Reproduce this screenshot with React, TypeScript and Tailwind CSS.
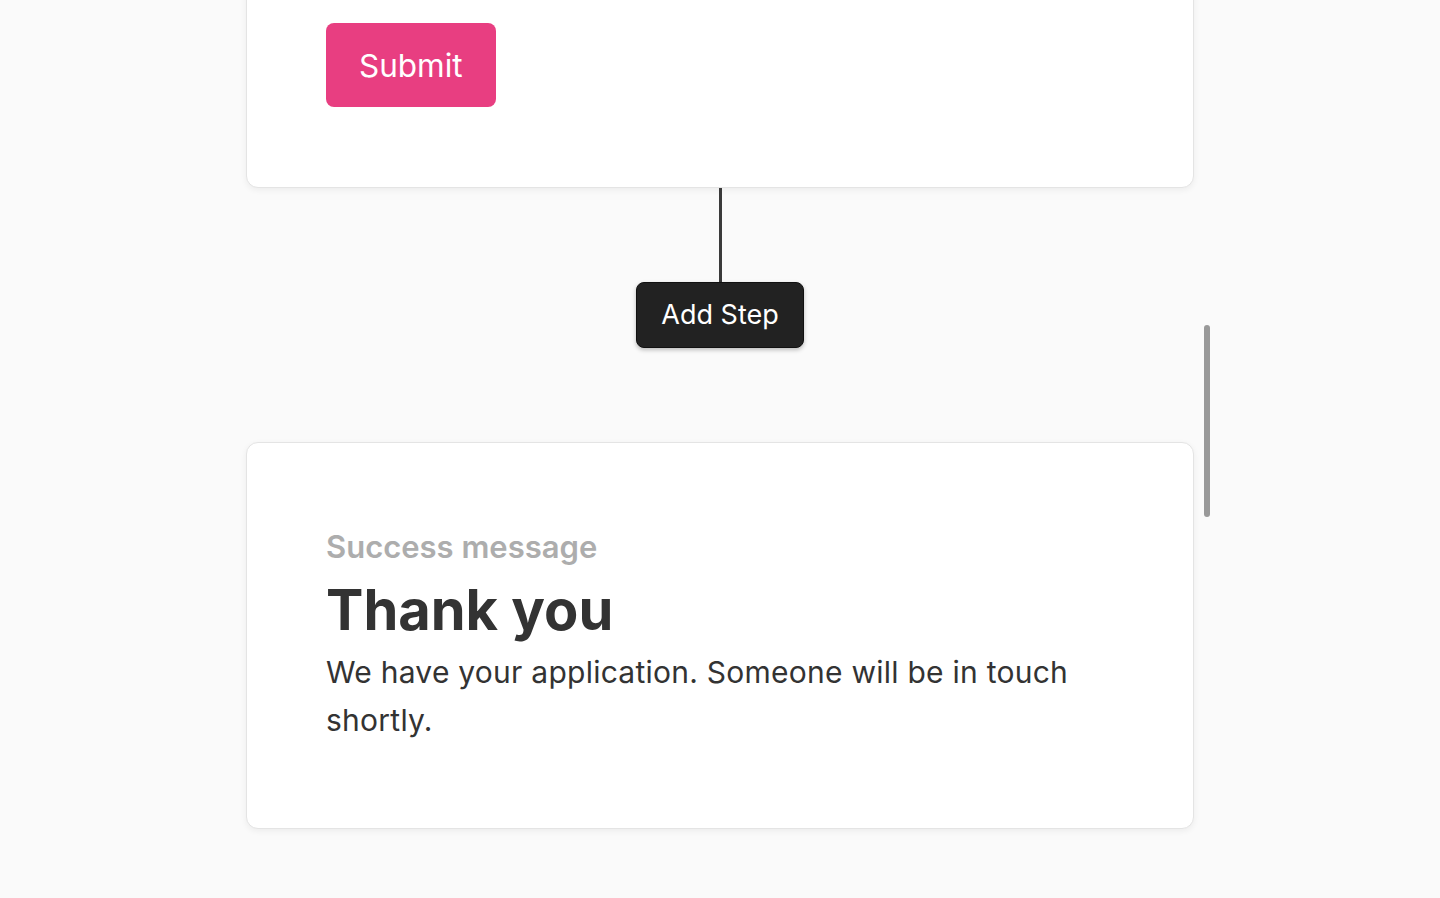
export default function App() {
  return (
    <div
      className="relative min-h-[898px] h-[898px] w-[1440px] overflow-hidden bg-[#fafafa]"
      style={{ fontFamily: "Inter, 'Noto Sans', sans-serif" }}
    >
      <div className="flex flex-col items-center">
        <div className="mt-[-57px] w-[948px] rounded-[12px] border border-[#e4e4e4] bg-white pl-[79px] pt-[79px] pb-[80px] shadow-[0_2px_6px_rgba(0,0,0,0.06)]">
          <button className="h-[84px] rounded-[8px] bg-[#e83e81] px-[33px] pt-[2px] text-[31.5px] font-normal text-white">
            Submit
          </button>
        </div>
        <div className="h-[94px] w-[3px] bg-[#3a3a3a]" />
        <button className="h-[66px] w-[168px] rounded-[8px] border border-[#111] bg-[#222] pt-[1px] text-[27px] text-white shadow-[0_2px_4px_rgba(0,0,0,0.25)]">
          Add Step
        </button>
        <div className="mt-[94px] w-[948px] rounded-[12px] border border-[#e4e4e4] bg-white px-[79px] pt-[81px] pb-[84px] shadow-[0_2px_6px_rgba(0,0,0,0.06)]">
          <div className="text-[31px] font-semibold leading-[45px] text-[#adadad]">
            Success message
          </div>
          <div className="mt-[9px] text-[56px] font-bold leading-[64px] text-[#333]">
            Thank you
          </div>
          <p className="mt-[6px] text-[30px] leading-[48px] tracking-[0.25px] text-[#333]">
            We have your application. Someone will be in touch shortly.
          </p>
        </div>
      </div>
      <div className="absolute left-[1204px] top-[325px] h-[192px] w-[6px] rounded-full bg-[#999]" />
    </div>
  );
}
